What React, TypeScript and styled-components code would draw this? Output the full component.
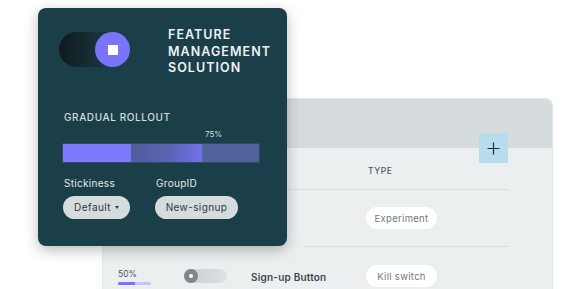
import React from "react";
import styled, { createGlobalStyle } from "styled-components";

const Global = createGlobalStyle`
  html, body { margin: 0; padding: 0; background: #ffffff; }
  body { font-family: Inter, "Noto Sans", sans-serif; -webkit-font-smoothing: antialiased; }
  * { box-sizing: border-box; }
`;

const Stage = styled.div`
  position: relative;
  width: 577px;
  height: 289px;
  overflow: hidden;
  background: #ffffff;
`;

/* ---------- back panel ---------- */
const Panel = styled.div`
  position: relative;
  margin: 98px 0 0 102px;
  width: 451px;
  height: 220px;
  border-radius: 8px 8px 0 0;
  background: #eceff0;
  border: 1px solid #e2e6e8;
  border-bottom: none;
  overflow: hidden;
`;

const PanelHeader = styled.div`
  height: 49px;
  background: #d6dbde;
`;

const PlusButton = styled.div`
  position: absolute;
  left: 376px;
  top: 35px;
  width: 29px;
  height: 29px;
  background: #b6dcee;
  display: flex;
  align-items: center;
  justify-content: center;
`;

const HeadRow = styled.div`
  height: 41px;
  display: flex;
  align-items: center;
  padding-left: 265px;
  padding-top: 4px;
`;

const ColHead = styled.span`
  font-size: 8.5px;
  font-weight: 500;
  letter-spacing: 0.6px;
  color: #4d585d;
`;

const Divider = styled.div<{ $left: number }>`
  height: 1px;
  margin-left: ${(p) => p.$left}px;
  width: ${(p) => 406 - p.$left}px;
  background: #d9dee0;
`;

const Row = styled.div<{ $h: number }>`
  height: ${(p) => p.$h}px;
  display: grid;
  grid-template-columns: 66px 67px 115px auto;
  align-items: center;
  padding-left: 15px;
`;

const Pill = styled.span`
  justify-self: start;
  display: inline-flex;
  align-items: center;
  justify-content: center;
  width: 71px;
  height: 22px;
  border-radius: 11px;
  background: #ffffff;
  font-size: 9.5px;
  font-weight: 400;
  color: #6e797e;
  letter-spacing: 0.3px;
`;

const Percent = styled.div`
  display: flex;
  flex-direction: column;
  gap: 3px;
  padding-top: 2px;
`;

const PercentText = styled.span`
  font-size: 8.5px;
  color: #4b565b;
`;

const MiniBar = styled.div`
  width: 33px;
  height: 3px;
  border-radius: 2px;
  background: #c7c3fb;
  overflow: hidden;
`;

const MiniFill = styled.div`
  height: 100%;
  background: #7b74fb;
`;

const SmallToggle = styled.div`
  width: 43px;
  height: 14px;
  border-radius: 7px;
  background: linear-gradient(90deg, #c6cdd0, #dde1e3);
  display: flex;
  align-items: center;
`;

const SmallKnob = styled.div`
  width: 14px;
  height: 14px;
  border-radius: 50%;
  background: #7c878c;
  display: flex;
  align-items: center;
  justify-content: center;
  &::after {
    content: "";
    width: 4px;
    height: 4px;
    border-radius: 50%;
    background: #ffffff;
  }
`;

const Name = styled.span`
  font-size: 10px;
  font-weight: 600;
  color: #3c474c;
  letter-spacing: 0.2px;
  padding-top: 2px;
`;

/* ---------- front card ---------- */
const Card = styled.div`
  position: absolute;
  left: 38px;
  top: 8px;
  width: 249px;
  height: 238px;
  border-radius: 8px;
  background: #1b3f49;
  box-shadow: 0 4px 14px rgba(0, 0, 0, 0.28);
  padding: 24px 26px 0 26px;
  display: flex;
  flex-direction: column;
`;

const TopRow = styled.div`
  display: flex;
  align-items: flex-start;
  gap: 38px;
  margin-left: -5px;
`;

const BigToggle = styled.div`
  width: 71px;
  height: 35px;
  border-radius: 18px;
  background: linear-gradient(90deg, #0f1a1e 0%, #17323a 55%, #1b3f49 100%);
  display: flex;
  justify-content: flex-end;
  flex-shrink: 0;
`;

const BigKnob = styled.div`
  width: 35px;
  height: 35px;
  border-radius: 50%;
  background: #7b74fb;
  display: flex;
  align-items: center;
  justify-content: center;
  &::after {
    content: "";
    width: 10px;
    height: 10px;
    background: #ffffff;
  }
`;

const Title = styled.div`
  margin-top: -5px;
  font-size: 12.5px;
  font-weight: 600;
  line-height: 16.5px;
  letter-spacing: 1.05px;
  color: #eef2f3;
`;

const SectionLabel = styled.div`
  margin-top: 34px;
  font-size: 10px;
  font-weight: 500;
  letter-spacing: 0.6px;
  color: #d3dcdf;
`;

const BarLabel = styled.div`
  margin-top: 6px;
  padding-left: 141px;
  font-size: 8px;
  color: #d3dcdf;
`;

const Bar = styled.div`
  margin-top: 5px;
  width: 196px;
  height: 18px;
  display: flex;
  margin-left: -1px;
  outline: 1px solid rgba(80, 100, 150, 0.35);
`;

const Segment = styled.div<{ $w: number; $bg: string }>`
  width: ${(p) => p.$w}px;
  height: 100%;
  background: ${(p) => p.$bg};
`;

const Fields = styled.div`
  margin-top: 15px;
  display: flex;
  gap: 25px;
  margin-left: -1px;
`;

const Field = styled.div`
  display: flex;
  flex-direction: column;
  gap: 7px;
`;

const FieldLabel = styled.span`
  font-size: 10px;
  color: #e3e9eb;
  letter-spacing: 0.3px;
  padding-left: 1px;
`;

const Select = styled.div<{ $w: number }>`
  width: ${(p) => p.$w}px;
  height: 23px;
  border-radius: 12px;
  background: #d6dbdd;
  display: flex;
  align-items: center;
  justify-content: center;
  gap: 4px;
  font-size: 10px;
  font-weight: 400;
  color: #2e3a3f;
  letter-spacing: 0.4px;
`;

const Caret = styled.span`
  width: 0;
  height: 0;
  border-left: 2.5px solid transparent;
  border-right: 2.5px solid transparent;
  border-top: 3px solid #2e3a3f;
  margin-top: 1px;
`;

export default function App() {
  return (
    <>
      <Global />
      <Stage>
        <Panel>
          <PanelHeader />
          <PlusButton>
            <svg width="13" height="13" viewBox="0 0 13 13">
              <path d="M6.5 0.5v12M0.5 6.5h12" stroke="#1a3038" strokeWidth="1.2" />
            </svg>
          </PlusButton>
          <HeadRow>
            <ColHead>TYPE</ColHead>
          </HeadRow>
          <Divider $left={0} />
          <Row $h={56}>
            <span />
            <span />
            <span />
            <Pill>Experiment</Pill>
          </Row>
          <Divider $left={201} />
          <Row $h={58}>
            <Percent>
              <PercentText>50%</PercentText>
              <MiniBar>
                <MiniFill style={{ width: "50%" }} />
              </MiniBar>
            </Percent>
            <SmallToggle>
              <SmallKnob />
            </SmallToggle>
            <Name>Sign-up Button</Name>
            <Pill>Kill switch</Pill>
          </Row>
        </Panel>

        <Card>
          <TopRow>
            <BigToggle>
              <BigKnob />
            </BigToggle>
            <Title>
              FEATURE
              <br />
              MANAGEMENT
              <br />
              SOLUTION
            </Title>
          </TopRow>
          <SectionLabel>GRADUAL ROLLOUT</SectionLabel>
          <BarLabel>75%</BarLabel>
          <Bar>
            <Segment $w={68} $bg="#7e78fc" />
            <Segment $w={71} $bg="linear-gradient(90deg, #4f5d9c 0%, #5a63b4 55%, #7470ec 100%)" />
            <Segment $w={57} $bg="#52629c" />
          </Bar>
          <Fields>
            <Field>
              <FieldLabel>Stickiness</FieldLabel>
              <Select $w={67}>
                Default <Caret />
              </Select>
            </Field>
            <Field>
              <FieldLabel>GroupID</FieldLabel>
              <Select $w={83}>New-signup</Select>
            </Field>
          </Fields>
        </Card>
      </Stage>
    </>
  );
}
